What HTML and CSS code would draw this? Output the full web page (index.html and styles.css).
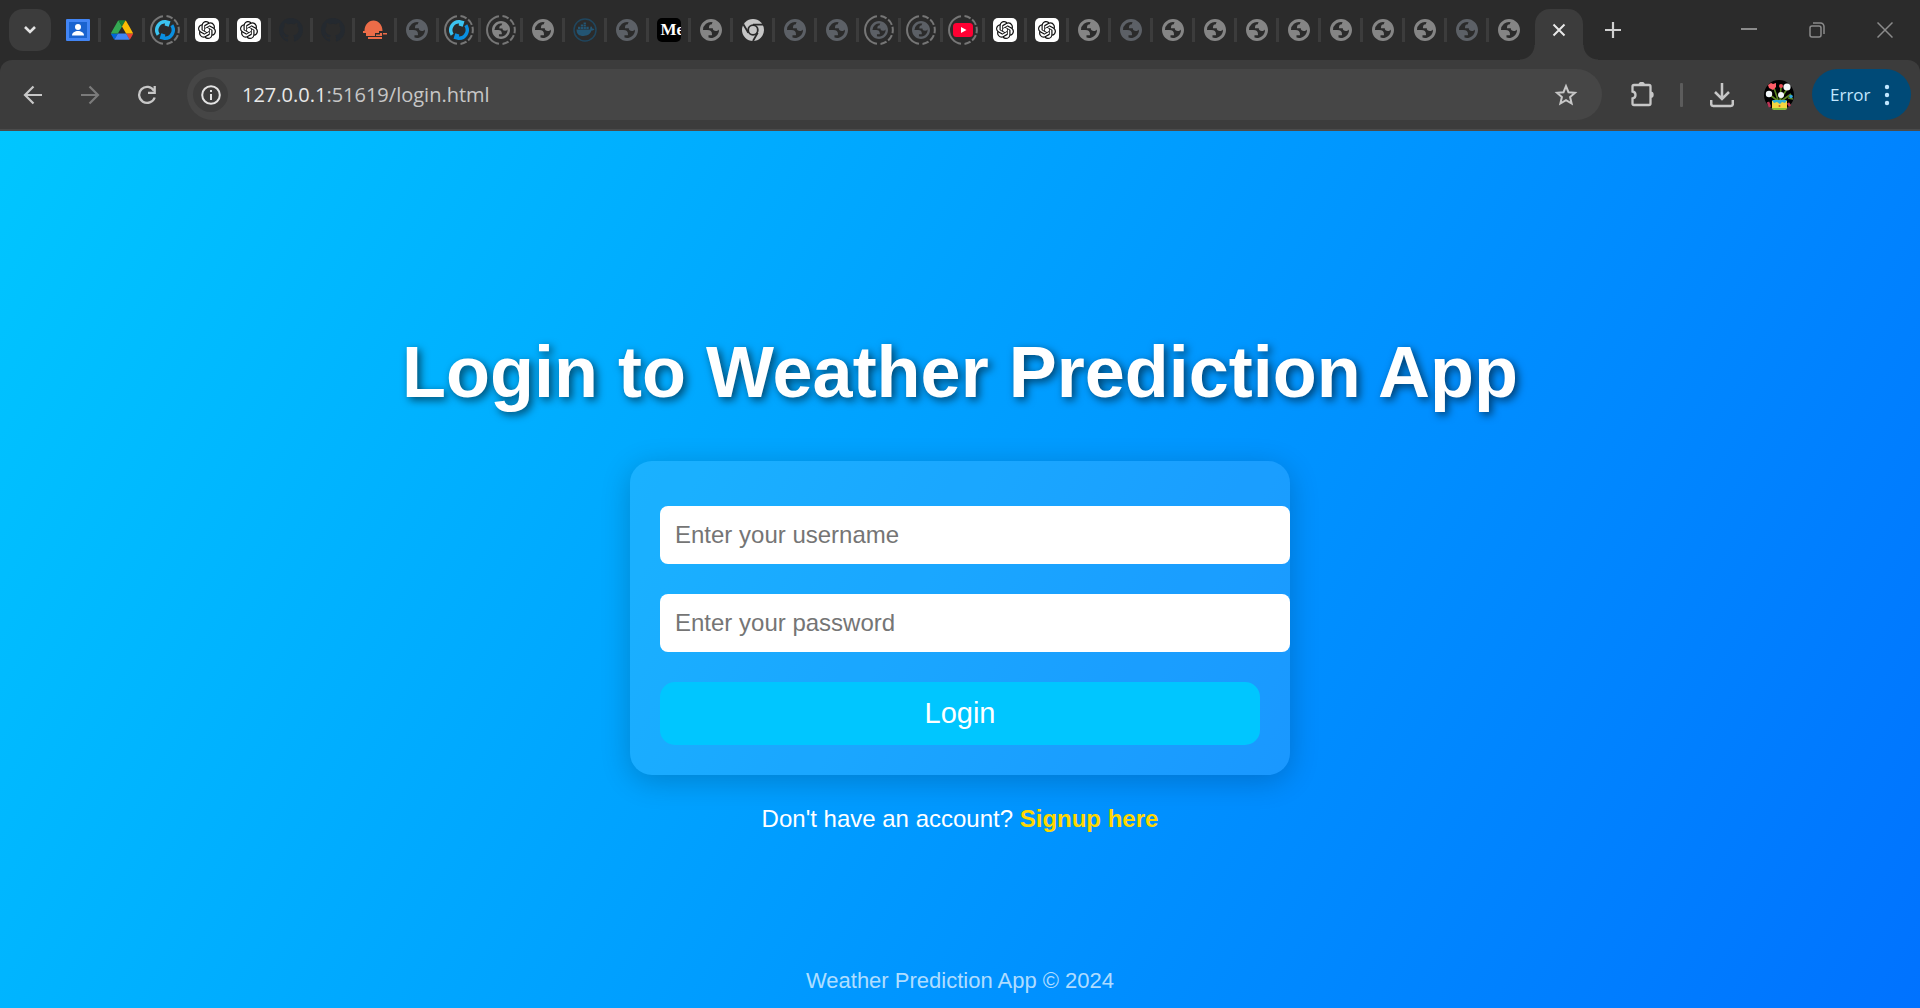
FILE: index.html
```html
<!DOCTYPE html>
<html lang="en">
<head>
<meta charset="utf-8">
<title>Login - Weather Prediction App</title>
<link rel="stylesheet" href="styles.css">
</head>
<body>
<svg class="sprite" aria-hidden="true">
  <symbol id="globe" viewBox="1 1 22 22"><path fill="currentColor" fill-rule="evenodd" d="M12 1C5.93 1 1 5.93 1 12s4.93 11 11 11 11-4.93 11-11S18.07 1 12 1zM4 12h4.4c3.407.022 4.922 1.73 4.543 5.127H9.488v2.47a8.004 8.004 0 0 0 10.498-8.083C19.327 12.504 18.332 13 17 13c-2.137 0-3.206-.916-3.206-2.75h-3.748c-.274-2.728.683-4.092 2.87-4.092 0-.975.327-1.597.811-1.97A8.004 8.004 0 0 0 4 12z"/></symbol>
  <symbol id="gpt" viewBox="0 0 24 24"><path fill="currentColor" d="M22.2819 9.8211a5.9847 5.9847 0 0 0-.5157-4.9108 6.0462 6.0462 0 0 0-6.5098-2.9A6.0651 6.0651 0 0 0 4.9807 4.1818a5.9847 5.9847 0 0 0-3.9977 2.9 6.0462 6.0462 0 0 0 .7427 7.0966 5.98 5.98 0 0 0 .511 4.9107 6.051 6.051 0 0 0 6.5146 2.9001A5.9847 5.9847 0 0 0 13.2599 24a6.0557 6.0557 0 0 0 5.7718-4.2058 5.9894 5.9894 0 0 0 3.9977-2.9001 6.0557 6.0557 0 0 0-.7475-7.0729zm-9.022 12.6081a4.4755 4.4755 0 0 1-2.8764-1.0408l.1419-.0804 4.7783-2.7582a.7948.7948 0 0 0 .3927-.6813v-6.7369l2.02 1.1686a.071.071 0 0 1 .038.052v5.5826a4.504 4.504 0 0 1-4.4945 4.4944zm-9.6607-4.1254a4.4708 4.4708 0 0 1-.5346-3.0137l.142.0852 4.783 2.7582a.7712.7712 0 0 0 .7806 0l5.8428-3.3685v2.3324a.0804.0804 0 0 1-.0332.0615L9.74 19.9502a4.4992 4.4992 0 0 1-6.1408-1.6464zM2.3408 7.8956a4.485 4.485 0 0 1 2.3655-1.9728V11.6a.7664.7664 0 0 0 .3879.6765l5.8144 3.3543-2.0201 1.1685a.0757.0757 0 0 1-.071 0l-4.8303-2.7865A4.504 4.504 0 0 1 2.3408 7.872zm16.5963 3.8558L13.1038 8.364 15.1192 7.2a.0757.0757 0 0 1 .071 0l4.8303 2.7913a4.4944 4.4944 0 0 1-.6765 8.1042v-5.6772a.79.79 0 0 0-.407-.667zm2.0107-3.0231l-.142-.0852-4.7735-2.7818a.7759.7759 0 0 0-.7854 0L9.409 9.2297V6.8974a.0662.0662 0 0 1 .0284-.0615l4.8303-2.7866a4.4992 4.4992 0 0 1 6.6802 4.66zM8.3065 12.863l-2.02-1.1638a.0804.0804 0 0 1-.038-.0567V6.0742a4.4992 4.4992 0 0 1 7.3757-3.4537l-.142.0805L8.704 5.459a.7948.7948 0 0 0-.3927.6813zm1.0976-2.3654l2.602-1.4998 2.6069 1.4998v2.9994l-2.5974 1.4997-2.6067-1.4997Z"/></symbol>
  <symbol id="github" viewBox="0 0 16 16"><path fill="currentColor" d="M8 0C3.58 0 0 3.58 0 8c0 3.54 2.29 6.53 5.47 7.59.4.07.55-.17.55-.38 0-.19-.01-.82-.01-1.49-2.01.37-2.53-.49-2.69-.94-.09-.23-.48-.94-.82-1.13-.28-.15-.68-.52-.01-.53.63-.01 1.08.58 1.23.82.72 1.21 1.87.87 2.33.66.07-.52.28-.87.51-1.07-1.78-.2-3.64-.89-3.64-3.95 0-.87.31-1.59.82-2.15-.08-.2-.36-1.02.08-2.12 0 0 .67-.21 2.2.82a7.64 7.64 0 0 1 4 0c1.53-1.04 2.2-.82 2.2-.82.44 1.1.16 1.92.08 2.12.51.56.82 1.27.82 2.15 0 3.07-1.87 3.75-3.65 3.95.29.25.54.73.54 1.48 0 1.07-.01 1.93-.01 2.2 0 .21.15.46.55.38A8.01 8.01 0 0 0 16 8c0-4.42-3.58-8-8-8z"/></symbol>
  <symbol id="sync" viewBox="0 0 20 20"><path fill="none" stroke="#3cc4f0" stroke-width="3.400" d="M3.200 14.700A8.300 8.300 0 0 1 11 1.800"/><path fill="#3cc4f0" d="M10.500 0l5 1.200-1.800 5.600-4-1.300z"/><path fill="none" stroke="#0a8fe0" stroke-width="3.400" d="M16.800 5.300A8.300 8.300 0 0 1 9 18.200"/><path fill="#0a8fe0" d="M9.500 20l-5-1.200 1.800-5.600 4 1.300z"/></symbol>
  <symbol id="ring" viewBox="0 0 30 30"><g fill="none" stroke="#767676" stroke-width="2"><path d="M13 1.150A14 14 0 0 0 13 28.850"/><path pathLength="100" stroke-dasharray="16 5" d="M16.500 1.100A14 14 0 0 1 16.500 28.900"/></g></symbol>
</svg>

<header class="browser">
  <div class="tab-strip">
    <button class="tab-search" aria-label="Search tabs"><svg width="14" height="10" viewBox="0 0 14 10"><path d="M2 2l5 5 5-5" fill="none" stroke="#e3e3e3" stroke-width="2.600"/></svg></button>
    <nav class="tabs" aria-label="Tabs">
      <button class="tab first" aria-label="Classroom"><svg width="24" height="22" viewBox="0 0 24 22"><rect width="24" height="22" rx="1" fill="#4285f4"/><rect x="3" y="3" width="18" height="16" fill="#1a63cf"/><circle cx="12" cy="8" r="3" fill="#fff"/><path d="M6 16.500c0-3 3-4.500 6-4.500s6 1.500 6 4.500z" fill="#fff"/></svg></button>
      <button class="tab wide" aria-label="Drive"><svg width="22" height="20" viewBox="0 0 87.300 78"><path fill="#0066da" d="m6.600 66.850 3.850 6.650c.8 1.400 1.950 2.500 3.300 3.300L27.500 53H0c0 1.550.4 3.100 1.200 4.500z"/><path fill="#34a853" d="M43.650 25 29.900 1.200c-1.350.8-2.500 1.900-3.300 3.300l-25.400 44A9 9 0 0 0 0 53h27.500z"/><path fill="#ea4335" d="M73.550 76.800c1.350-.8 2.500-1.900 3.300-3.300l9.250-16c.8-1.400 1.200-2.950 1.200-4.500H59.800l5.850 11.500z"/><path fill="#188038" d="M43.650 25 57.400 1.200C56.050.4 54.500 0 52.900 0H34.400c-1.600 0-3.150.45-4.500 1.200z"/><path fill="#4285f4" d="M59.800 53H27.500L13.750 76.800c1.350.8 2.900 1.200 4.500 1.200h50.800c1.600 0 3.150-.45 4.500-1.200z"/><path fill="#fbbc04" d="m73.400 26.500-12.700-22c-.8-1.400-1.950-2.500-3.300-3.300L43.650 25 59.800 53h27.450c0-1.550-.4-3.100-1.200-4.500z"/></svg></button>
      <button class="tab sleeping" aria-label="Sync"><svg class="ring"><use href="#ring"/></svg><svg class="mark"><use href="#sync"/></svg></button>
      <button class="tab" aria-label="Chat"><span class="tile light"><svg><use href="#gpt"/></svg></span></button>
      <button class="tab" aria-label="Chat"><span class="tile light"><svg><use href="#gpt"/></svg></span></button>
      <button class="tab navy" aria-label="Repository"><svg class="full"><use href="#github"/></svg></button>
      <button class="tab navy" aria-label="Repository"><svg class="full"><use href="#github"/></svg></button>
      <button class="tab" aria-label="Sunset"><svg width="24" height="20" viewBox="0 0 24 20"><path fill="#ec6c48" d="M1.500 11C1.500 5 5.500 .500 10.500 .500S19.500 5 19.500 11zM0 11h16v2H0zM17 13h2v1.500h-2zM20 13h4v1.500h-4zM3 13h9v3H3zM13 14.500h6V16h-6zM5 17h14v2H5z"/></svg></button>
      <button class="tab slate" aria-label="Page"><svg class="globe"><use href="#globe"/></svg></button>
      <button class="tab sleeping" aria-label="Sync"><svg class="ring"><use href="#ring"/></svg><svg class="mark"><use href="#sync"/></svg></button>
      <button class="tab sleeping" aria-label="Page"><svg class="ring"><use href="#ring"/></svg><svg class="mini"><use href="#globe"/></svg></button>
      <button class="tab" aria-label="Page"><svg class="globe"><use href="#globe"/></svg></button>
      <button class="tab" aria-label="Docker"><svg class="full" viewBox="0 0 24 24"><circle cx="12" cy="12" r="11" fill="none" stroke="#20465e" stroke-width="1.500"/><path fill="#235573" d="M3.500 11.500h13.800c-.3-1.500 0-2.500.7-3.200 1 .7 1.300 1.500 1.300 2.200 1 0 1.700.2 2.200.6-.6 1-1.600 1.500-2.900 1.500C17.200 16.500 14 18 10.500 18c-4.500 0-7-2-7-6.500zM5 8.800h2.300V11H5zM7.800 8.800h2.300V11H7.800zM10.600 8.800h2.300V11h-2.300zM13.400 8.800h2.300V11h-2.300zM7.800 6.500h2.300v1.800H7.800zM10.600 6.500h2.300v1.800h-2.300zM10.600 4.500h2.300V6h-2.300z"/></svg></button>
      <button class="tab slate" aria-label="Page"><svg class="globe"><use href="#globe"/></svg></button>
      <button class="tab" aria-label="Article"><span class="tile dark">Me</span></button>
      <button class="tab" aria-label="Page"><svg class="globe"><use href="#globe"/></svg></button>
      <button class="tab" aria-label="Chrome"><svg class="globe" viewBox="0 0 22 22"><circle cx="11" cy="11" r="11" fill="#c6c6c6"/><circle cx="11" cy="11" r="4.800" fill="#c6c6c6" stroke="#2b2b2b" stroke-width="1.800"/><path stroke="#2b2b2b" stroke-width="1.800" d="M11 5.600h10M6.300 13.700L1.300 5.200M15.700 13.700L11 22"/></svg></button>
      <button class="tab slate" aria-label="Page"><svg class="globe"><use href="#globe"/></svg></button>
      <button class="tab slate" aria-label="Page"><svg class="globe"><use href="#globe"/></svg></button>
      <button class="tab slate sleeping" aria-label="Page"><svg class="ring"><use href="#ring"/></svg><svg class="mini"><use href="#globe"/></svg></button>
      <button class="tab slate sleeping" aria-label="Page"><svg class="ring"><use href="#ring"/></svg><svg class="mini"><use href="#globe"/></svg></button>
      <button class="tab sleeping" aria-label="Video"><svg class="ring"><use href="#ring"/></svg><svg class="mark" viewBox="0 0 20 20"><rect y="3" width="20" height="14" rx="3.500" fill="#ff0033"/><path d="M8 7l5.500 3L8 13z" fill="#fff"/></svg></button>
      <button class="tab" aria-label="Chat"><span class="tile light"><svg><use href="#gpt"/></svg></span></button>
      <button class="tab" aria-label="Chat"><span class="tile light"><svg><use href="#gpt"/></svg></span></button>
      <button class="tab" aria-label="Page"><svg class="globe"><use href="#globe"/></svg></button>
      <button class="tab slate" aria-label="Page"><svg class="globe"><use href="#globe"/></svg></button>
      <button class="tab" aria-label="Page"><svg class="globe"><use href="#globe"/></svg></button>
      <button class="tab" aria-label="Page"><svg class="globe"><use href="#globe"/></svg></button>
      <button class="tab" aria-label="Page"><svg class="globe"><use href="#globe"/></svg></button>
      <button class="tab" aria-label="Page"><svg class="globe"><use href="#globe"/></svg></button>
      <button class="tab" aria-label="Page"><svg class="globe"><use href="#globe"/></svg></button>
      <button class="tab" aria-label="Page"><svg class="globe"><use href="#globe"/></svg></button>
      <button class="tab" aria-label="Page"><svg class="globe"><use href="#globe"/></svg></button>
      <button class="tab slate" aria-label="Page"><svg class="globe"><use href="#globe"/></svg></button>
      <button class="tab last" aria-label="Page"><svg class="globe"><use href="#globe"/></svg></button>
    </nav>
    <button class="active-tab" aria-label="Close tab"><svg width="14" height="14" viewBox="0 0 14 14"><path d="M1.500 1.500l11 11M12.500 1.500l-11 11" stroke="#e8e8e8" stroke-width="2"/></svg></button>
    <button class="new-tab" aria-label="New tab"><svg width="16" height="16" viewBox="0 0 16 16"><path d="M8 0v16M0 8h16" stroke="#d0d0d0" stroke-width="2.200"/></svg></button>
    <div class="window-controls">
      <button aria-label="Minimize"><svg width="16" height="16" viewBox="0 0 16 16"><path d="M0 7h16" stroke="#8b8b8b" stroke-width="2"/></svg></button>
      <button aria-label="Restore"><svg width="16" height="16" viewBox="0 0 16 16"><g fill="none" stroke="#8b8b8b" stroke-width="1.500"><rect x="1" y="4" width="11" height="11" rx="2"/><path d="M4 1h7.500a3.500 3.500 0 0 1 3.500 3.500V12"/></g></svg></button>
      <button aria-label="Close"><svg width="16" height="16" viewBox="0 0 16 16"><path d="M.5.500l15 15M15.500.500l-15 15" stroke="#8b8b8b" stroke-width="1.500"/></svg></button>
    </div>
  </div>

  <div class="toolbar">
    <button class="tool" aria-label="Back"><svg width="20" height="20" viewBox="0 0 20 20"><path d="M19 10H2M10.500 1.500L2 10l8.500 8.500" fill="none" stroke="#c7c7c7" stroke-width="2.200"/></svg></button>
    <button class="tool" aria-label="Forward"><svg width="20" height="20" viewBox="0 0 20 20"><path d="M1 10h17M9.500 1.500L18 10l-8.500 8.500" fill="none" stroke="#7b7b7b" stroke-width="2.200"/></svg></button>
    <button class="tool" aria-label="Reload"><svg width="20" height="20" viewBox="0 0 20 20"><path d="M17.700 12.500A8 8 0 1 1 17 5.800" fill="none" stroke="#c7c7c7" stroke-width="2.300"/><path d="M17.700 1v6.800H11" fill="none" stroke="#c7c7c7" stroke-width="2.300"/></svg></button>
    <div class="omnibox">
      <button class="site-info" aria-label="Site information"><svg width="20" height="20" viewBox="0 0 20 20"><circle cx="10" cy="10" r="8.800" fill="none" stroke="#e3e3e3" stroke-width="2"/><path d="M10 9v6M10 5v2" stroke="#e3e3e3" stroke-width="2"/></svg></button>
      <div class="address" role="textbox" aria-label="Address"><span class="host">127.0.0.1</span>:51619/login.html</div>
      <button class="bookmark" aria-label="Bookmark"><svg width="24" height="24" viewBox="0 0 24 24"><path d="M12 3.200l2.500 6 6.500.6-4.900 4.300 1.500 6.400-5.600-3.400-5.600 3.400 1.500-6.400L3 9.800l6.500-.6z" fill="none" stroke="#c7c7c7" stroke-width="2"/></svg></button>
    </div>
    <button class="tool extensions" aria-label="Extensions"><svg width="26" height="26" viewBox="0 1 26 26"><path d="M3.500 5.500Q3.500 4 5 4h15q1.500 0 1.500 1.500v17Q21.500 24 20 24H5q-1.500 0-1.500-1.500V17.500q3-.5 3-3.500t-3-3.500z" fill="none" stroke="#c7c7c7" stroke-width="2.300"/><path d="M9.500 4a3.200 3.200 0 0 1 6.400 0zM21.500 10.500a3.200 3.200 0 0 1 0 6.400z" fill="#c7c7c7"/></svg></button>
    <span class="divider"></span>
    <button class="tool" aria-label="Downloads"><svg width="24" height="26" viewBox="0 0 24 26"><path d="M12 1v15M5 10l7 7 7-7M1.200 18v4q0 2 2 2h17.600q2 0 2-2v-4" fill="none" stroke="#c7c7c7" stroke-width="2.500"/></svg></button>
    <button class="tool" aria-label="Profile"><svg width="30" height="30" viewBox="0 0 30 30"><circle cx="15" cy="15" r="15"/><path d="M10 8l4 12M17 7l-1 13M23 9l-7 11M6 15l8 6M27 14l-11 8M24 18l5 1" fill="none" stroke="#5c8a22" stroke-width="1.600"/><path d="M4 5l3-2 2 1 3-1v4L9 10 5 8z" fill="#ff5d67"/><circle cx="17" cy="6" r="2" fill="#e94b55"/><g fill="#f2f7fa"><circle cx="23" cy="7" r="3.600"/><circle cx="5" cy="14" r="3.200"/><circle cx="17" cy="15" r="3"/></g><circle cx="27" cy="16.500" r="1.800" fill="#31a8df"/><path d="M4 22l2 5M24 23l2 3" stroke="#bd3456" stroke-width="2.500"/><path d="M8 21h15v8q-7.500 3-15 0z" fill="#f5d641"/><path d="M8 20h15l-2 3-3-1-2 2-3-2-3 1z" fill="#2eacd5"/><path d="M8 28h15v1q-7.500 3-15 0z" fill="#83bc38"/><circle cx="15.500" cy="26" r="1" fill="#c65a20"/></svg></button>
    <button class="error-chip">Error<svg width="6" height="22" viewBox="0 0 6 22"><g fill="#c2e7ff"><circle cx="3" cy="3" r="2.200"/><circle cx="3" cy="11" r="2.200"/><circle cx="3" cy="19" r="2.200"/></g></svg></button>
  </div>
</header>

<main class="page">
  <h1>Login to Weather Prediction App</h1>
  <form class="card">
    <input type="text" placeholder="Enter your username" aria-label="Username">
    <input type="password" placeholder="Enter your password" aria-label="Password">
    <button class="login" type="button">Login</button>
  </form>
  <p class="signup">Don't have an account? <a href="#signup">Signup here</a></p>
  <footer>Weather Prediction App © 2024</footer>
</main>
</body>
</html>
```
FILE: styles.css
```css
* { box-sizing: border-box; }

body {
  margin: 0;
  min-height: 100vh;
  display: flex;
  flex-direction: column;
  background: #2b2b2b;
  font-family: "Liberation Sans", Arial, sans-serif;
}

button {
  border: 0;
  padding: 0;
  background: none;
  color: inherit;
  font-family: inherit;
}

svg { display: block; flex: none; }
.sprite { position: absolute; width: 0; height: 0; }

/* Tab strip */
.tab-strip {
  display: flex;
  align-items: flex-start;
  height: 60px;
  padding: 9px 9px 0;
}

.tab-search {
  display: grid;
  place-items: center;
  width: 42px;
  height: 42px;
  margin-right: 7px;
  border-radius: 14px;
  background: #3c3c3c;
}

.tabs { display: flex; padding-top: 9px; }

.tab {
  position: relative;
  display: flex;
  align-items: center;
  justify-content: center;
  width: 42px;
  height: 24px;
  border-right: 3px solid #3c3c3c;
  color: #858585;
}
.tab.first { width: 43px; }
.tab.wide { width: 44px; }
.tab.last { border-right-color: transparent; }
.tab.slate { color: #5c6066; }
.tab.navy { color: #24292f; }

.full { width: 24px; height: 24px; }
.globe { width: 22px; height: 22px; }
.mark { width: 20px; height: 20px; }
.mini { width: 18px; height: 18px; }
.ring {
  position: absolute;
  inset: -3px auto auto calc(50% - 15px);
  width: 30px;
  height: 30px;
}

.tile {
  display: flex;
  align-items: center;
  width: 24px;
  height: 24px;
  border-radius: 5px;
  overflow: hidden;
}
.tile.light { justify-content: center; background: #fff; color: #111; }
.tile.light svg { width: 18px; height: 18px; }
.tile.dark {
  padding-left: 4px;
  background: #000;
  color: #fff;
  font: bold 17px/24px "Liberation Serif", serif;
}

.active-tab {
  position: relative;
  display: grid;
  place-items: center;
  width: 48px;
  height: 51px;
  margin-left: 4px;
  padding-bottom: 9px;
  border-radius: 15px 15px 0 0;
  background: #3c3c3c;
}
.active-tab::before,
.active-tab::after {
  content: "";
  position: absolute;
  bottom: 0;
  width: 15px;
  height: 15px;
}
.active-tab::before {
  right: 100%;
  background: radial-gradient(circle at 0 0, #2b2b2b 14px, #3c3c3c 15px);
}
.active-tab::after {
  left: 100%;
  background: radial-gradient(circle at 100% 0, #2b2b2b 14px, #3c3c3c 15px);
}

.new-tab {
  display: grid;
  place-items: center;
  width: 42px;
  height: 42px;
  margin-left: 9px;
}

.window-controls { display: flex; margin-left: auto; }
.window-controls button {
  display: grid;
  place-items: center;
  width: 68px;
  height: 42px;
}
.window-controls button:last-child { width: 52px; margin-left: 8px; }

/* Toolbar */
.toolbar {
  display: flex;
  align-items: center;
  height: 71px;
  padding: 0 9px 0 4px;
  border-bottom: 2px solid #4b4b4b;
  border-radius: 12px 12px 0 0;
  background: #3c3c3c;
}

.tool {
  display: grid;
  place-items: center;
  width: 57px;
  height: 51px;
}

.omnibox {
  display: flex;
  align-items: center;
  flex: 1;
  height: 51px;
  margin-left: 12px;
  padding: 0 24px 0 6px;
  border-radius: 26px;
  background: #464646;
}
.site-info {
  display: grid;
  place-items: center;
  width: 35px;
  height: 35px;
  border-radius: 50%;
  background: #3c3c3c;
}
.address {
  flex: 1;
  margin-left: 14px;
  color: #c7c7c7;
  font: 20px/28px "Open Sans", "Noto Sans", sans-serif;
}
.host { color: #e8e8e8; }

.extensions { margin-left: 11px; }
.divider {
  width: 3px;
  height: 24px;
  margin: 0 10px;
  border-radius: 1px;
  background: #5c5c5c;
}

.error-chip {
  display: flex;
  align-items: center;
  justify-content: space-between;
  width: 99px;
  height: 51px;
  margin-left: 5px;
  padding: 0 21px 0 18px;
  border-radius: 26px;
  background: #004a77;
  color: #c2e7ff;
  font: 17px/24px "Open Sans", "Noto Sans", sans-serif;
}

/* Login page */
.page {
  flex: 1;
  display: flex;
  flex-direction: column;
  align-items: center;
  padding: 199px 24px 14px;
  background: linear-gradient(120deg, #00c6ff, #0072ff);
  color: #fff;
}

h1 {
  margin: 0;
  font-size: 72px;
  line-height: 84px;
  text-align: center;
  text-shadow: 3px 3px 8px rgba(0, 0, 0, 0.6);
}

.card {
  display: flex;
  flex-direction: column;
  gap: 30px;
  width: 660px;
  max-width: 100%;
  margin-top: 47px;
  padding: 45px 30px 30px;
  border-radius: 22px;
  background: rgba(255, 255, 255, 0.1);
  box-shadow: 0 6px 30px rgba(0, 0, 0, 0.2);
}

.card input {
  box-sizing: content-box;
  width: 100%;
  height: 28px;
  padding: 15px;
  border: 0;
  border-radius: 8px;
  background: #fff;
  font: 24px/28px "Liberation Sans", Arial, sans-serif;
}
.card input::placeholder { color: #757575; }

.login {
  height: 63px;
  border-radius: 15px;
  background: #00c6ff;
  color: #fff;
  font-size: 29px;
}

.signup {
  margin: 30px 0;
  font-size: 24px;
  line-height: 28px;
}
.signup a {
  color: #ffd700;
  font-weight: bold;
  text-decoration: none;
}

footer {
  margin-top: auto;
  color: rgba(255, 255, 255, 0.7);
  font-size: 22px;
  line-height: 26px;
}
```
